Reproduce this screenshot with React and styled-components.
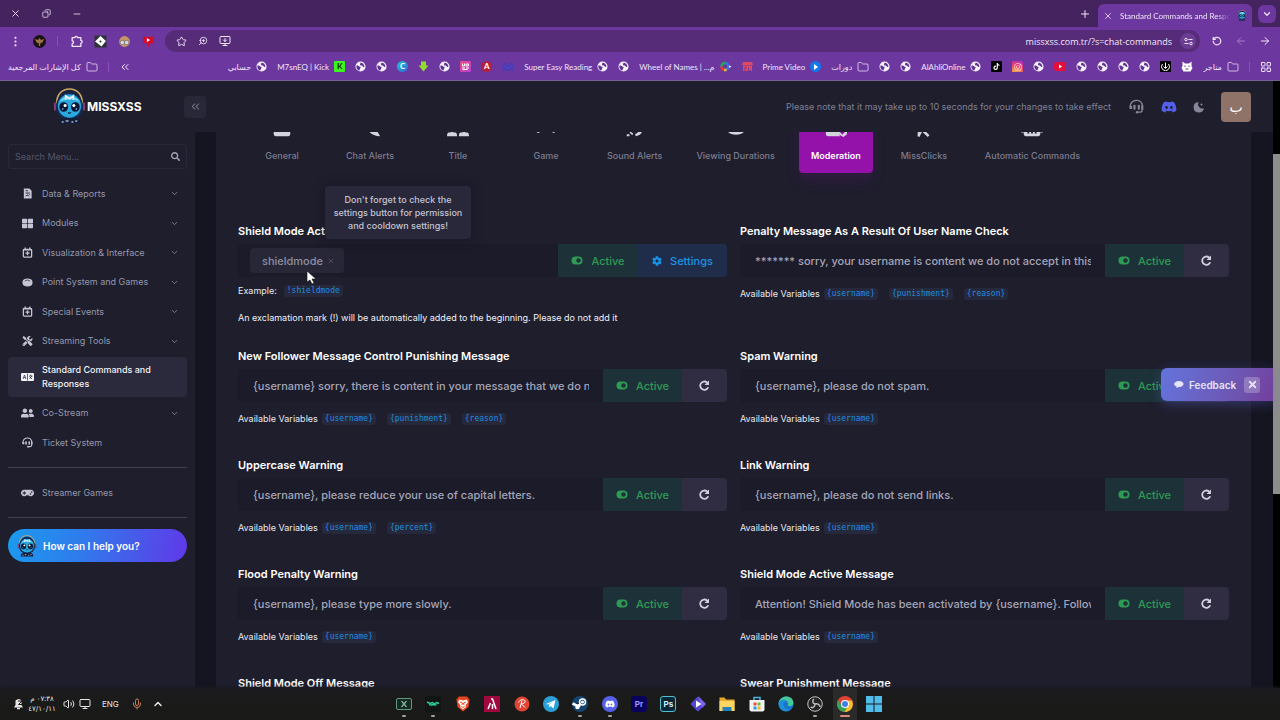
import { useState } from 'react';
import styled, { createGlobalStyle, css } from 'styled-components'
import { FaSearch, FaThLarge, FaTools, FaUserFriends, FaGamepad, FaDiscord, FaInstagram, FaTiktok, FaCog } from 'react-icons/fa';
import { X, Copy, Minus, Plus, Star, MonitorDown, ZoomIn, ArrowLeft, ArrowRight, ChevronDown, ChevronUp, ChevronsLeft, Folder, LayoutGrid, Volume2, Monitor, Mic, EllipsisVertical, RotateCcw } from 'lucide-react';

const GlobalStyle = createGlobalStyle`
  * {
    box-sizing: border-box;
  }
  body {
    margin: 0;
    background: #151521;
    font-family: Inter, "DejaVu Sans", sans-serif;
    color: #fff;
  }
  button, input {
    font-family: inherit;
    border: none;
    margin: 0;
    padding: 0;
    background: none;
    color: inherit;
  }
  button {
    cursor: pointer;
  }
  a {
    color: inherit;
    text-decoration: none;
  }
  svg {
    display: block;
    flex: none;
  }
`
const Screen = styled.div`
  height: 100vh;
  display: flex;
  flex-direction: column;
  overflow: hidden;
`

/* ---------- browser window ---------- */

const TitleBar = styled.div`
  height: 27px;
  flex: none;
  display: flex;
  align-items: center;
  justify-content: space-between;
  padding: 0 4px 0 8px;
  background-color: #45235f;
  color: #eee4f6;
  font-family: Lato, "DejaVu Sans", sans-serif;
`
const WindowControls = styled.div`
  display: flex;
  gap: 17px;
`
const IconButton = styled.button`
  width: ${(p) => p.$size || 14}px;
  height: ${(p) => p.$size || 14}px;
  display: flex;
  align-items: center;
  justify-content: center;
  flex: none;
  color: ${(p) => p.$color || 'inherit'};
`
const TabStrip = styled.div`
  align-self: stretch;
  display: flex;
  align-items: center;
  gap: 6px;
`
const BrowserTab = styled.div`
  width: 154px;
  height: 23px;
  align-self: flex-end;
  display: flex;
  align-items: center;
  gap: 7px;
  padding: 0 5px;
  border-radius: 6px 6px 0 0;
  background-color: #6c379f;
  font-size: 8px;
`
const TabTitle = styled.span`
  flex: 1;
  white-space: nowrap;
  overflow: hidden;
  mask-image: linear-gradient(to right, #000 88%, transparent);
`
const TabSearch = styled(IconButton)`
  border-radius: 6px;
  background-color: #6c379f;
`
const Toolbar = styled.div`
  height: 28px;
  flex: none;
  display: flex;
  align-items: center;
  padding: 0 8px;
  gap: 10px;
  background-color: #6c379f;
  color: #f1e6fa;
  font-family: "Open Sans", "DejaVu Sans", sans-serif;
`
const Extensions = styled.div`
  display: flex;
  align-items: center;
  gap: 11px;
`
const Separator = styled.span`
  width: 1px;
  height: 10px;
  background-color: #8a4fc0;
`
const AddressBar = styled.div`
  flex: 1;
  height: 22px;
  display: flex;
  align-items: center;
  gap: 8px;
  padding: 0 4px 0 9px;
  border-radius: 11px;
  background-color: #562c78;
`
const AddressInput = styled.input`
  flex: 1;
  min-width: 0;
  text-align: right;
  font-size: 9px;
  outline: none;
`
const SiteInfo = styled(IconButton)`
  border-radius: 50%;
  background-color: #6c3d94;
`
const BookmarksBar = styled.nav`
  height: 26px;
  flex: none;
  display: flex;
  align-items: center;
  padding: 0 8px 2px;
  gap: 10px;
  border-bottom: 1px solid #75608f;
  background-color: #6c379f;
  color: #f1e6fa;
  font-family: Lato, "DejaVu Sans", sans-serif;
  font-size: 8px;
  white-space: nowrap;
`
const BookmarkList = styled.div`
  flex: 1;
  display: flex;
  align-items: center;
  justify-content: space-between;
  margin-left: 87px;
`
const Bookmark = styled.a`
  display: flex;
  align-items: center;
  gap: 5px;
`
const Favicon = styled.span`
  width: 11px;
  height: 11px;
  display: flex;
  align-items: center;
  justify-content: center;
  border-radius: ${(p) => (p.$round ? '50%' : '1px')};
  background: ${(p) => p.$bg};
  color: ${(p) => p.$color || '#fff'};
  font-size: 8px;
  font-weight: 700;
  line-height: 11px;
`

/* ---------- dashboard ---------- */

const PageWrapper = styled.div`
  flex: 1;
  min-height: 0;
  display: flex;
  position: relative;
`
const Dashboard = styled.div`
  flex: 1;
  min-width: 0;
  display: flex;
  flex-direction: column;
`
const ScrollTrack = styled.div`
  width: 7px;
  display: grid;
  grid-template-rows: 12fr 56fr 32fr;
  background-color: #000;
`
const ScrollThumb = styled.div`
  grid-row: 2;
  background-color: #8d8d8b;
`
const Header = styled.header`
  height: 51px;
  flex: none;
  display: flex;
  align-items: center;
  padding: 0 22px 0 53px;
  background-color: #1e1e2d;
`
const Brand = styled.a`
  display: flex;
  align-items: center;
  gap: 1px;
  width: 131px;
  font-size: 12px;
  font-weight: 700;
`
const CollapseButton = styled(IconButton)`
  border-radius: 3px;
  background-color: #282838;
  color: #6a6a7d;
`
const HeaderNote = styled.span`
  margin-left: auto;
  color: #808093;
  font-size: 9px;
`
const HeaderIcons = styled.div`
  display: flex;
  align-items: center;
  gap: 14px;
  margin-left: 14px;
  color: #858598;
`
const Avatar = styled.button`
  width: 30px;
  height: 30px;
  border-radius: 4px;
  background-color: #8f7268;
  color: #fff;
  font-size: 14px;
`
const Body = styled.div`
  flex: 1;
  min-height: 0;
  display: flex;
`
const Sidebar = styled.aside`
  width: 195px;
  flex: none;
  padding: 12px 8px;
  background-color: #1e1e2d;
`
const SearchBox = styled.label`
  height: 25px;
  display: flex;
  align-items: center;
  padding: 0 6px;
  border: 1px solid #28283a;
  border-radius: 3px;
  color: #a2a2b5;
`
const SearchInput = styled.input`
  flex: 1;
  min-width: 0;
  font-size: 9px;
  outline: none;
  &::placeholder {
    color: #565669;
    opacity: 1;
  }
`
const Menu = styled.nav`
  min-height: 276px;
  display: flex;
  flex-direction: column;
  justify-content: space-between;
  margin-top: 11px;
`
const MenuItem = styled.a`
  min-height: 27px;
  display: flex;
  align-items: center;
  gap: 8px;
  padding: 6px 8px 6px 13px;
  border-radius: 4px;
  color: #9697aa;
  font-size: 9px;
  line-height: 14px;

  & > svg:first-child {
    width: 13px;
    color: #c5c5d6;
  }
  & > span {
    flex: 1;
  }
  ${(p) => p.$active && css`
    padding-right: 24px;
    background-color: #2a2a3c;
    color: #f2f2f8;
    font-weight: 500;
  `}
`
const Divider = styled.hr`
  height: 1px;
  margin: 11px 0;
  border: none;
  background-color: #42424f;
`
const HelpButton = styled.button`
  width: 100%;
  height: 33px;
  display: flex;
  align-items: center;
  gap: 6px;
  padding: 0 9px;
  border-radius: 17px;
  background: linear-gradient(100deg, #1a9bee, #2f7cec 40%, #6038e8);
  font-size: 10px;
  font-weight: 600;
`
const Content = styled.main`
  flex: 1;
  min-width: 0;
  margin: 0 22px 0 21px;
  padding: 0 22px;
  overflow: hidden;
  background-color: #1e1e2d;
`
const Tabs = styled.div`
  height: 41px;
  display: flex;
  align-items: flex-end;
  gap: 14px;
  padding-left: 7px;
`
const Tab = styled.button`
  min-width: 74px;
  height: 73px;
  display: flex;
  flex-direction: column;
  align-items: center;
  justify-content: flex-end;
  gap: 10px;
  padding: 0 10px 9px;
  border-radius: 4px;
  color: #7c7c8f;
  font-size: 9px;
  font-weight: 500;
  line-height: 16px;
  white-space: nowrap;
  & > svg {
    color: #d4d4dc;
  }
  ${(p) => p.$active && css`
    background-color: #9411aa;
    color: #fff;
    font-weight: 600;
    box-shadow: 0 8px 14px rgba(110, 20, 130, 0.22);
  `}
`
const FormGrid = styled.form`
  display: grid;
  grid-template-columns: 1fr 1fr;
  gap: 21px 13px;
  margin-top: 49px;
`
const Field = styled.div`
  min-width: 0;
  min-height: 88px;
`
const FieldLabel = styled.label`
  display: block;
  margin-bottom: 4px;
  font-size: 11px;
  font-weight: 600;
  line-height: 18px;
`
const InputGroup = styled.div`
  height: 33px;
  display: flex;
  border-radius: 4px;
  overflow: hidden;
  background-color: #1c1b29;
`
const TextInput = styled.input`
  flex: 1;
  min-width: 0;
  padding: 0 14px 0 15px;
  color: #a5a5b8;
  font-size: 11px;
  font-weight: 500;
  outline: none;
`
const TagArea = styled.div`
  flex: 1;
  min-width: 0;
  display: flex;
  align-items: center;
  padding-left: 12px;
`
const Tag = styled.span`
  height: 25px;
  display: flex;
  align-items: center;
  gap: 3px;
  padding: 0 8px 0 12px;
  border-radius: 4px;
  background-color: #272737;
  color: #8e8ea2;
  font-size: 11px;
  font-weight: 500;
`
const GroupButton = styled.button`
  width: ${(p) => p.$width}px;
  flex: none;
  display: flex;
  align-items: center;
  justify-content: center;
  gap: 8px;
  font-size: 11px;
  font-weight: 500;
  ${(p) => p.$kind === 'active' && css`
    background-color: #1c3238;
    color: #309a55;
  `}
  ${(p) => p.$kind === 'settings' && css`
    background-color: #1f2d4a;
    color: #1a93e6;
  `}
  ${(p) => p.$kind === 'reset' && css`
    background-color: #302d43;
    color: #d0d0de;
  `}
`
const HelpLine = styled.div`
  display: flex;
  align-items: center;
  gap: ${(p) => (p.$example ? 7 : 4)}px;
  margin-top: ${(p) => (p.$example ? 6 : 9)}px;
  color: #e9e9f0;
  font-size: 9px;
  line-height: 16px;
`
const Variable = styled.code`
  margin-right: ${(p) => (p.$example ? 0 : 7)}px;
  padding: 0 3px;
  border-radius: 3px;
  background-color: #26283b;
  color: #1f8ee0;
  font-family: "DejaVu Sans Mono", monospace;
  font-size: 8px;
  line-height: 12px;
`
const Hint = styled.p`
  margin: 11px 0 0;
  color: #f0f0f5;
  font-size: 9px;
  line-height: 16px;
`

/* ---------- floating parts ---------- */

const Tooltip = styled.div`
  position: absolute;
  top: 105px;
  left: 325px;
  width: 146px;
  padding: 7px 8px;
  border-radius: 4px;
  background-color: #28283a;
  box-shadow: 0 0 12px rgba(10, 10, 20, 0.35);
  color: #c4c4d2;
  font-size: 9px;
  font-weight: 500;
  line-height: 13px;
  text-align: center;
`
const Feedback = styled.div`
  position: absolute;
  top: 287px;
  right: 7px;
  width: 112px;
  height: 33px;
  display: flex;
  align-items: center;
  gap: 5px;
  padding-left: 13px;
  border-radius: 6px 0 0 6px;
  background: linear-gradient(110deg, #6474dc, #6e54b0 70%, #733f9c);
  box-shadow: 0 3px 12px rgba(95, 100, 220, 0.35);
  color: #e6e4f6;
  font-size: 10px;
  font-weight: 600;
`
const FeedbackClose = styled(IconButton)`
  margin-left: 3px;
  border-radius: 3px;
  background-color: rgba(255, 255, 255, 0.24);
`
const Cursor = styled.svg`
  position: absolute;
  top: 189px;
  left: 306px;
`

/* ---------- taskbar ---------- */

const Taskbar = styled.footer`
  height: 32px;
  flex: none;
  display: flex;
  align-items: center;
  padding-left: 13px;
  background: linear-gradient(#1c1b20, #1b1b1b 6px, #191918);
  box-shadow: 0 -1px 3px #1c1b20;
  position: relative;
  color: #e6e6e6;
`
const Tray = styled.div`
  width: 383px;
  display: flex;
  align-items: center;
  font-size: 8px;
`
const Clock = styled.div`
  width: 28px;
  margin: 0 7px 0 3px;
  text-align: center;
  font-size: 7px;
  line-height: 10px;
  white-space: nowrap;
`
const TrayItem = styled.span`
  margin-right: ${(p) => p.$space}px;
`
const Apps = styled.div`
  width: 486px;
  display: flex;
  justify-content: space-between;
`
const AppButton = styled.button`
  width: 16px;
  height: 32px;
  display: flex;
  flex-direction: column;
  align-items: center;
  padding-top: 8px;
  gap: 3px;
  ${(p) => p.$current && css`
    background-color: #2b2a2b;
    box-shadow: -4px 0 #2b2a2b, 4px 0 #2b2a2b;
  `}
`
const AppMark = styled.span`
  width: ${(p) => (p.$current ? 10 : 4)}px;
  height: 2px;
  border-radius: 1px;
  background-color: ${(p) => (p.$current ? '#e08878' : '#a2a2a2')};
`
const AppTile = styled.span`
  width: 16px;
  height: 16px;
  border: 1px solid ${(p) => p.$border};
  border-radius: 3px;
  background-color: ${(p) => p.$bg};
  color: ${(p) => p.$color};
  font-size: 8px;
  font-weight: 700;
  line-height: 14px;
  text-align: center;
`

const Globe = () => (
  <svg width="11" height="11" viewBox="0 0 24 24">
    <circle cx="12" cy="12" r="11" fill="#f7f1fc" />
    <path d="M3 10c3-1 5 0 6 2l3 1c1 2-1 2-1 4l-2 4C6 20 2 16 3 10zM13 3l5 3 3 6-3 1-3-3-4-1 0-3z" fill="#5f3190" />
  </svg>
)

const Mascot = ({ size }) => (
  <svg width={size} height={Math.round(size * 1.12)} viewBox="0 0 34 38">
    <path d="M4 17C3 6 10 1 17 1s14 5 13 16" fill="none" stroke="#c9a869" strokeWidth="1.600" />
    <path d="M5 17C5 7 11 3 17 3s12 4 12 14" fill="#15264c" />
    <circle cx="17" cy="19" r="14" fill="#152b55" />
    <circle cx="17" cy="18.500" r="12" fill="#28a9df" />
    <path d="M7 14c3-7 17-7 20 0-5-3-15-3-20 0z" fill="#74d3ef" />
    <path d="M13 12V8l4 3 4-3v4" fill="none" stroke="#eef" strokeWidth="1.600" />
    <ellipse cx="11" cy="19.500" rx="4.500" ry="5" fill="#0d1634" />
    <ellipse cx="23" cy="19.500" rx="4.500" ry="5" fill="#0d1634" />
    <circle cx="12.500" cy="18" r="1.600" fill="#fff" />
    <circle cx="21.500" cy="18" r="1.600" fill="#fff" />
    <circle cx="10" cy="21.500" r=".8" fill="#8bdcff" />
    <circle cx="24" cy="21.500" r=".8" fill="#8bdcff" />
    <path d="M15.500 25q1.500 1.500 3 0" fill="none" stroke="#0d1634" strokeWidth="1.200" />
    <path d="M2 15v8M32 15v8" stroke="#8d3d78" strokeWidth="2" />
    <path d="M7 33c3-3 17-3 20 0l1 4H6z" fill="#141d3a" />
    <path d="M9 35h2M13 34h3M19 35h2M23 34h2" stroke="#a5b3cb" strokeWidth="1.600" />
  </svg>
)

const PuzzleIcon = () => (
  <svg width="13" height="13" viewBox="0 0 24 24" fill="none" stroke="currentColor" strokeWidth="2.400" strokeLinejoin="round">
    <path d="M4 5h5a2.500 2.500 0 0 1 5 0h6v5a2.500 2.500 0 0 1 0 5v6H4v-5a2.500 2.500 0 0 0 0-5z" />
  </svg>
)

const ToggleIcon = () => (
  <svg width="12" height="9" viewBox="0 0 24 18">
    <rect x="1" y="1" width="22" height="16" rx="8" fill="currentColor" />
    <circle cx="15" cy="9" r="4.500" fill="#1c3238" />
  </svg>
)

const RefreshIcon = () => (
  <svg width="11" height="11" viewBox="0 0 22 22" fill="none" stroke="currentColor" strokeWidth="3.600">
    <path d="M18.500 14.500A8.300 8.300 0 1 1 16 4.800L18 7" />
    <path d="M20 1v9h-9z" fill="currentColor" stroke="none" />
  </svg>
)

const SupportIcon = ({ size = 15 }) => (
  <svg width={size} height={size} viewBox="0 0 24 24" fill="none" stroke="currentColor" strokeWidth="2.200">
    <path d="M2 14V11a10 10 0 0 1 19-3v10q0 3-4 3h-4" />
    <path d="M1 11h4v5H1zM20 10h3v7h-3z" fill="currentColor" stroke="none" />
    <rect x="7" y="9" width="3.500" height="8" rx="1.500" fill="currentColor" stroke="none" />
    <rect x="14" y="9" width="3.500" height="8" rx="1.500" fill="currentColor" stroke="none" />
    <circle cx="13" cy="21" r="2" fill="currentColor" stroke="none" />
  </svg>
)

const MoonIcon = () => (
  <svg width="12" height="12" viewBox="0 0 24 24" fill="currentColor">
    <path d="M11 2a9 9 0 0 0 11 12.500A10.500 10.500 0 1 1 11 2z" />
    <path d="M17 4l1 2 2 1-2 1-1 2-1-2-2-1 2-1z" />
  </svg>
)

const ReportIcon = () => (
  <svg height="11" viewBox="0 0 24 24">
    <path d="M4 1h12l5 5v17H4z" fill="currentColor" />
    <path d="M8 6h5M8 11h9M8 18l3-3 3 2 3-3" stroke="#1e1e2d" strokeWidth="2" fill="none" />
  </svg>
)

const CalendarPlusIcon = () => (
  <svg height="11" viewBox="0 0 24 24" fill="none" stroke="currentColor" strokeWidth="2.800">
    <rect x="3" y="5" width="18" height="17" rx="2" />
    <path d="M3 6h18M7 1v5M17 1v5M12 9v9M7.500 13.500h9" />
  </svg>
)

const CoinIcon = () => (
  <svg height="9" viewBox="0 0 24 20">
    <path d="M1 8c0-9 22-9 22 0v4c0 9-22 9-22 0z" fill="currentColor" />
    <path d="M6 7c3-3 9-3 12 0" stroke="#1e1e2d" strokeWidth="1.500" fill="none" />
  </svg>
)

const TranslateIcon = () => (
  <svg height="8" viewBox="0 0 26 16">
    <rect width="26" height="16" rx="2" fill="#f2f2f8" />
    <path d="M13 1v14M4 12l3-8 3 8M5 9h4M16 6h7M19.500 3v3M17 12l5-6M17 7l5 5" stroke="#2a2a3c" strokeWidth="1.400" fill="none" />
  </svg>
)

const BubbleIcon = () => (
  <svg width="10" height="9" viewBox="0 0 20 18">
    <path d="M10 2c12 0 12 12 0 12l-5 2v-3C-3 10 0 2 10 2z" fill="currentColor" />
  </svg>
)

// only the lower edge of these shows under the header
const tabDrawings = {
  general: <path d="M3 4h18v16q0 2-2 2H5q-2 0-2-2z" />,
  chat: <path d="M2 3h18v14q2 3 3 5-8 0-12-5H2z" />,
  title: <path d="M2 18h7q2 0 2 4H0q0-4 2-4zM15 18h7q2 0 2 4H13q0-4 2-4zM4 2h3v17H4zM17 2h3v17h-3z" />,
  game: <path d="M3 3h18q3 12 0 15.500-3 0-5-5H8q-2 5-5 5-3-1 0-15.500z" />,
  sound: <path d="M7 17l3 2-1 2-3-3zM3 20h3v2H3zM12 20q4-2 5-5l3 1q-1 5-7 6z" />,
  view: <path d="M3 6h18v11q-3 3.500-9 3.500T3 17z" />,
  moderation: <><path d="M1 4h15v18H3q-2 0-2-2z" /><path d="M14 9h11v8q0 3-5 6-6-3-6-6z" /><path d="M16 16l3 3 4-5" stroke="#9411aa" strokeWidth="2" fill="none" /></>,
  click: <path d="M6 2l14 13-7 1 5 5-2 2-6-6-3 6-2-1z" />,
  auto: <><path d="M3 4h18v16q0 2-2 2H5q-2 0-2-2zM0 16h3v2H0zM21 16h3v2h-3z" /><path d="M7 18h2M11 18h2M15 18h2" stroke="#1e1e2d" strokeWidth="2" /></>,
}

const tabs = [
  { icon: 'general', name: 'General' },
  { icon: 'chat', name: 'Chat Alerts' },
  { icon: 'title', name: 'Title' },
  { icon: 'game', name: 'Game' },
  { icon: 'sound', name: 'Sound Alerts' },
  { icon: 'view', name: 'Viewing Durations' },
  { icon: 'moderation', name: 'Moderation' },
  { icon: 'click', name: 'MissClicks' },
  { icon: 'auto', name: 'Automatic Commands' },
]

const menu = [
  { name: 'Data & Reports', icon: <ReportIcon />, more: true },
  { name: 'Modules', icon: <FaThLarge size={11} />, more: true },
  { name: 'Visualization & Interface', icon: <CalendarPlusIcon />, more: true },
  { name: 'Point System and Games', icon: <CoinIcon />, more: true },
  { name: 'Special Events', icon: <CalendarPlusIcon />, more: true },
  { name: 'Streaming Tools', icon: <FaTools size={10} />, more: true },
  { name: 'Standard Commands and Responses', icon: <TranslateIcon />, active: true },
  { name: 'Co-Stream', icon: <FaUserFriends size={12} />, more: true },
  { name: 'Ticket System', icon: <SupportIcon size={11} /> },
]

const initialFields = [
  { id: 'penalty', label: 'Penalty Message As A Result Of User Name Check', value: '******* sorry, your username is content we do not accept in this channel.', vars: ['username', 'punishment', 'reason'] },
  { id: 'follower', label: 'New Follower Message Control Punishing Message', value: '{username} sorry, there is content in your message that we do not accept.', vars: ['username', 'punishment', 'reason'] },
  { id: 'spam', label: 'Spam Warning', value: '{username}, please do not spam.', vars: ['username'] },
  { id: 'uppercase', label: 'Uppercase Warning', value: '{username}, please reduce your use of capital letters.', vars: ['username', 'percent'] },
  { id: 'link', label: 'Link Warning', value: '{username}, please do not send links.', vars: ['username'] },
  { id: 'flood', label: 'Flood Penalty Warning', value: '{username}, please type more slowly.', vars: ['username'] },
  { id: 'shieldOn', label: 'Shield Mode Active Message', value: 'Attention! Shield Mode has been activated by {username}. Follower chat is on.', vars: ['username'] },
  { id: 'shieldOff', label: 'Shield Mode Off Message', value: '', vars: ['username'] },
  { id: 'swear', label: 'Swear Punishment Message', value: '', vars: ['username'] },
]

const bookmarks = [
  { text: 'حسابي', icon: <Globe /> },
  { text: 'M7snEQ | Kick', icon: <Favicon $bg="#3df51e" $color="#0c1a0c">K</Favicon> },
  { icon: <Globe /> },
  { icon: <Globe /> },
  { icon: <Favicon $round $bg="linear-gradient(135deg, #27c6d8, #2f62dd)">C</Favicon> },
  { icon: <svg width="11" height="11" viewBox="0 0 22 22"><path d="M6 1h10v8h5L11 21 1 9h5z" fill="#93dc2c" /></svg> },
  { icon: <Globe /> },
  { icon: <Favicon $bg="linear-gradient(135deg, #f0477e, #b83fd8)"><svg width="9" height="9" viewBox="0 0 18 18"><path d="M3 3v5h4V3M10 4h5v4h-5zM2 12h6M10 12h6M3 15h10" stroke="#fff" strokeWidth="2" fill="none" /></svg></Favicon> },
  { icon: <Favicon $round $bg="#b51f3d">A</Favicon> },
  { icon: <svg width="12" height="11" viewBox="0 0 24 22"><path d="M1 4h6l5 5 5-5h6v15H1z" fill="#4a3cb4" /><path d="M4 9l8 6 8-6" stroke="#5b45c8" strokeWidth="2" fill="none" /></svg> },
  { text: 'Super Easy Reading', icon: <Globe /> },
  { icon: <Globe /> },
  { text: 'Wheel of Names | ...م', icon: <svg width="12" height="11" viewBox="0 0 24 22"><circle cx="10" cy="11" r="7" fill="none" stroke="#3a75e8" strokeWidth="5" /><path d="M3 11a7 7 0 0 1 7-7" fill="none" stroke="#2ba24c" strokeWidth="5" /><path d="M3 11a7 7 0 0 0 5 7" fill="none" stroke="#e3342f" strokeWidth="5" /><path d="M8 18h5" stroke="#f1b91f" strokeWidth="5" /><path d="M18 9l5 2-5 3z" fill="#fff" /></svg> },
  { icon: <svg width="11" height="11" viewBox="0 0 22 22"><path d="M2 2h18l2 6H0zM2 9h18v11H2z" fill="#dc4b64" /><path d="M6 19v-6h3M13 13v6h4" stroke="#6c379f" strokeWidth="2" fill="none" /></svg> },
  { text: 'Prime Video', icon: <Favicon $round $bg="#1279ec"><svg width="5" height="6" viewBox="0 0 5 6"><path d="M1 0l4 3-4 3z" fill="#fff" /></svg></Favicon> },
  { text: 'دورات', icon: <Folder size={12} strokeWidth={1.5} /> },
  { icon: <Globe /> },
  { icon: <Globe /> },
  { text: 'AlAhliOnline', icon: <Globe /> },
  { icon: <Favicon $bg="#000"><FaTiktok size={7} /></Favicon> },
  { icon: <Favicon $bg="linear-gradient(200deg, #a52fd0, #ef3b63 50%, #f8b13c)"><FaInstagram size={8} /></Favicon> },
  { icon: <Globe /> },
  { icon: <svg width="12" height="9" viewBox="0 0 24 18"><rect width="24" height="18" rx="4" fill="#e3103b" /><path d="M10 5l6 4-6 4z" fill="#fff" /></svg> },
  { icon: <Globe /> },
  { icon: <Globe /> },
  { icon: <Globe /> },
  { icon: <Globe /> },
  { icon: <Favicon $bg="#000"><svg width="9" height="9" viewBox="0 0 18 18"><path d="M3 4a8 8 0 1 0 12 0M9 1v11M5 9l4 4 4-4" stroke="#fff" strokeWidth="2" fill="none" /></svg></Favicon> },
  { icon: <svg width="12" height="11" viewBox="0 0 24 22"><path d="M3 1l5 4h8l5-4v9l2 4-4 7H5l-4-7 2-4z" fill="#fff" /><path d="M8 9v3M16 9v3M9 16h6" stroke="#6c379f" strokeWidth="2" /></svg> },
  { text: 'متاجر', icon: <Folder size={12} strokeWidth={1.5} /> },
]

const apps = [
  { name: 'Excel', open: true, art: <><rect x="1" y="5" width="30" height="22" rx="3" fill="#17261f" stroke="#5e9c83" strokeWidth="2" /><path d="M11 10l10 12M21 10L11 22" stroke="#78b99e" strokeWidth="2.500" /></> },
  { name: 'Monitor', open: true, art: <><rect width="32" height="32" rx="4" fill="#111514" /><path d="M4 12l6 3 5-2 4 3 4-3 5 2M8 17l5 1 4-1 6 1" stroke="#2bd39b" strokeWidth="3" fill="none" /></> },
  { name: 'Brave', art: <><path d="M8 1h16l5 6-2 15-11 9L5 22 3 7z" fill="#e8431e" /><path d="M9 7l7 2 7-2 3 5-5 7 1 3-6 5-6-5 1-3-5-7z" fill="#fff" /><path d="M10 12l5 2-1 4M22 12l-5 2 1 4M13 21l3 2 3-2" stroke="#e8431e" strokeWidth="2" fill="none" /></> },
  { name: 'Alight', art: <><rect width="32" height="32" fill="#a1083f" /><path d="M8 26l5-12M14 6h3l7 20M17 16v10" stroke="#fff" strokeWidth="3" fill="none" /></> },
  { name: 'Recorder', art: <><circle cx="16" cy="16" r="15" fill="#df4332" /><path d="M9 13c3-8 15-7 13-1-1 4-8 4-8 4M16 9l-4 15M16 17l6 6" stroke="#fff" strokeWidth="2" fill="none" /></> },
  { name: 'Telegram', art: <><circle cx="16" cy="16" r="16" fill="#2ca0d6" /><path d="M6 16l19-8-4 17-6-5-3 3v-6l9-6-11 6z" fill="#fff" /></> },
  { name: 'Steam', open: true, art: <><circle cx="16" cy="16" r="16" fill="#15436f" /><circle cx="21" cy="12" r="6" fill="none" stroke="#fff" strokeWidth="3" /><circle cx="21" cy="12" r="3" fill="#fff" /><path d="M1 15l11 5 6-5M12 21l4-2" stroke="#fff" strokeWidth="5" /><circle cx="11" cy="22" r="4.500" fill="#fff" /></> },
  { name: 'Discord', open: true, art: <><circle cx="16" cy="16" r="16" fill="#5661ea" /><FaDiscord x="6" y="6" size={20} color="#fff" /></> },
  { name: 'Premiere', tile: <AppTile $bg="#08005c" $border="#08005c" $color="#a39bff">Pr</AppTile> },
  { name: 'Photoshop', tile: <AppTile $bg="#0a2534" $border="#48c4d4" $color="#d6f3fb">Ps</AppTile> },
  { name: 'Player', art: <><rect x="5" y="5" width="22" height="22" rx="3" transform="rotate(45 16 16)" fill="#5546d1" /><path d="M16 0l16 16-8 8z" fill="#7a62ea" /><path d="M12 9l11 7-11 7z" fill="#fff" /></> },
  { name: 'Files', art: <><path d="M1 3h10l3 4h17v23H1z" fill="#e6a82c" /><path d="M1 10h30v20H1z" fill="#fcd462" /><path d="M7 22h18v8H7z" fill="#2280bd" /></> },
  { name: 'Store', art: <><path d="M10 9V3h12v6" fill="none" stroke="#48b4dd" strokeWidth="3" /><path d="M1 8h30v19q0 4-4 4H5q-4 0-4-4z" fill="#f2f2f2" /><path d="M9 13h6v6H9z" fill="#e65035" /><path d="M17 13h6v6h-6z" fill="#70b83c" /><path d="M9 21h6v6H9z" fill="#2e98dc" /><path d="M17 21h6v6h-6z" fill="#edb72b" /></> },
  { name: 'Edge', art: <><circle cx="16" cy="16" r="15" fill="#1a74c8" /><path d="M1 14C4-3 30-4 31 14c0 6-8 8-12 5 4-6-2-11-8-9-5 1-9 3-10 4z" fill="#45c99b" /><path d="M1 14c3-8 14-8 18-3-5-1-9 2-8 7 1 7 8 11 14 8-8 9-24 4-24-12z" fill="#1c8fd8" /></> },
  { name: 'OBS', open: true, art: <><circle cx="16" cy="16" r="14.500" fill="#242326" stroke="#c4c4c4" strokeWidth="2" /><path d="M16 16c-5-1-6-7-2-10M16 16c5-2 10 2 10 6M16 16c0 6-5 9-9 6" stroke="#bbb" strokeWidth="3" fill="none" /></> },
  { name: 'Chrome', current: true, art: <><circle cx="16" cy="16" r="16" fill="#e14133" /><path d="M2 8a16 16 0 0 0 13 24l8-13H9z" fill="#35a356" /><path d="M30 9a16 16 0 0 1-15 23l8-14-4-9z" fill="#f5c22b" /><circle cx="16" cy="16" r="8" fill="#fff" /><circle cx="16" cy="16" r="6" fill="#407fe8" /></> },
  { name: 'Start', art: <path d="M0 0h15v15H0zM17 0h15v15H17zM0 17h15v15H0zM17 17h15v15H17z" fill="#51bdea" /> },
]

const BrowserChrome = () => (
  <>
    <TitleBar>
      <WindowControls>
        <IconButton aria-label="Close"><X size={11} /></IconButton>
        <IconButton aria-label="Restore"><Copy size={9} transform="scale(-1 1)" /></IconButton>
        <IconButton aria-label="Minimize"><Minus size={10} /></IconButton>
      </WindowControls>
      <TabStrip>
        <IconButton aria-label="New tab"><Plus size={12} /></IconButton>
        <BrowserTab>
          <IconButton aria-label="Close tab" $size={10}><X size={10} /></IconButton>
          <TabTitle>Standard Commands and Responses</TabTitle>
          <Mascot size={10} />
        </BrowserTab>
        <TabSearch aria-label="Search tabs" $size={18}><ChevronDown size={10} strokeWidth={3} /></TabSearch>
      </TabStrip>
    </TitleBar>
    <Toolbar>
      <Extensions>
        <IconButton aria-label="Menu"><EllipsisVertical size={13} /></IconButton>
        <svg width="13" height="13" viewBox="0 0 26 26"><circle cx="13" cy="13" r="13" fill="#1b1313" /><path d="M4 8l6 2 3-4 3 4 6-2-3 7-4 1-1 6h-2l-1-6-4-1z" fill="#9b7446" /></svg>
        <Separator />
        <IconButton aria-label="Extensions"><PuzzleIcon /></IconButton>
        <svg width="13" height="13" viewBox="0 0 24 24"><path d="M1 1h22v22H1z" fill="#2a3434" /><path d="M12 2l10 9-8 10L2 12z" fill="#fff" /><circle cx="12" cy="12" r="2" fill="#2a3434" /></svg>
        <svg width="13" height="13" viewBox="0 0 24 24"><circle cx="12" cy="12" r="10" fill="#c79565" /><circle cx="8" cy="14" r="4" fill="#d5dde4" stroke="#556" /><circle cx="16" cy="14" r="4" fill="#d5dde4" stroke="#556" /></svg>
        <svg width="13" height="13" viewBox="0 0 24 24"><path d="M2 3h20v12h-6l-4 8-3-8H2z" fill="#d40c2c" /><path d="M9 6l6 3-6 4z" fill="#fff" /></svg>
      </Extensions>
      <AddressBar>
        <IconButton aria-label="Bookmark"><Star size={11} /></IconButton>
        <IconButton aria-label="Zoom"><ZoomIn size={10} transform="scale(-1 1)" /></IconButton>
        <IconButton aria-label="Install"><MonitorDown size={12} transform="scale(-1 1)" /></IconButton>
        <AddressInput aria-label="Address" defaultValue="missxss.com.tr/?s=chat-commands" />
        <SiteInfo aria-label="Site information" $size={16}>
          <svg width="9" height="9" viewBox="0 0 18 18" fill="none" stroke="currentColor" strokeWidth="2"><circle cx="4" cy="5" r="2.500" /><circle cx="14" cy="13" r="2.500" /><path d="M9 5h8M1 13h8" /></svg>
        </SiteInfo>
      </AddressBar>
      <IconButton aria-label="Reload"><RotateCcw size={10} strokeWidth={3} /></IconButton>
      <IconButton aria-label="Forward" $color="#a57acb"><ArrowLeft size={12} /></IconButton>
      <IconButton aria-label="Back"><ArrowRight size={12} /></IconButton>
    </Toolbar>
    <BookmarksBar>
      <Bookmark href="#all">
        <span>كل الإشارات المرجعية</span>
        <Folder size={12} strokeWidth={1.5} />
      </Bookmark>
      <Separator />
      <ChevronsLeft size={12} />
      <BookmarkList>
        {bookmarks.map((mark, index) => (
          <Bookmark key={index} href="#bookmark" aria-label={mark.text || 'Bookmark'}>
            {mark.text && <span>{mark.text}</span>}
            {mark.icon}
          </Bookmark>
        ))}
      </BookmarkList>
      <Separator />
      <LayoutGrid size={12} />
    </BookmarksBar>
  </>
)

const SideMenu = () => (
  <Sidebar>
    <SearchBox>
      <SearchInput type="text" placeholder="Search Menu..." aria-label="Search Menu" />
      <FaSearch size={9} />
    </SearchBox>
    <Menu>
      {menu.map((item) => (
        <MenuItem key={item.name} href="#menu" $active={item.active}>
          {item.icon}
          <span>{item.name}</span>
          {item.more && <ChevronDown size={9} />}
        </MenuItem>
      ))}
    </Menu>
    <Divider />
    <MenuItem href="#games">
      <FaGamepad size={12} />
      <span>Streamer Games</span>
    </MenuItem>
    <Divider />
    <HelpButton>
      <Mascot size={20} />
      How can I help you?
    </HelpButton>
  </Sidebar>
)

const MessageField = ({ field, onChange }) => (
  <Field>
    <FieldLabel htmlFor={field.id}>{field.label}</FieldLabel>
    <InputGroup>
      <TextInput id={field.id} value={field.value} onChange={(e) => onChange(field.id, e.target.value)} />
      <GroupButton type="button" $kind="active" $width={79}><ToggleIcon />Active</GroupButton>
      <GroupButton type="button" $kind="reset" $width={45} aria-label="Reset"><RefreshIcon /></GroupButton>
    </InputGroup>
    <HelpLine>
      Available Variables
      {field.vars.map((name) => (
        <Variable key={name}>{`{${name}}`}</Variable>
      ))}
    </HelpLine>
  </Field>
)

const App = () => {
  const [fields, setFields] = useState(initialFields)

  const handleChange = (id, value) => {
    setFields(fields.map((field) => (field.id === id ? { ...field, value } : field)))
  }

  return (
    <Screen>
      <GlobalStyle />
      <BrowserChrome />
      <PageWrapper>
        <Dashboard>
          <Header>
            <Brand href="#home"><Mascot size={33} />MISSXSS</Brand>
            <CollapseButton aria-label="Collapse menu" $size={22}><ChevronsLeft size={13} /></CollapseButton>
            <HeaderNote>Please note that it may take up to 10 seconds for your changes to take effect</HeaderNote>
            <HeaderIcons>
              <IconButton aria-label="Support" $size={22}><SupportIcon /></IconButton>
              <IconButton aria-label="Discord" $size={16} $color="#5560ea"><FaDiscord size={16} /></IconButton>
              <IconButton aria-label="Theme" $size={16}><MoonIcon /></IconButton>
              <Avatar aria-label="Account">ب</Avatar>
            </HeaderIcons>
          </Header>
          <Body>
            <SideMenu />
            <Content>
              <Tabs>
                {tabs.map((tab) => (
                  <Tab key={tab.name} $active={tab.name === 'Moderation'}>
                    <svg width="22" height="22" viewBox="0 0 24 24" fill="currentColor">{tabDrawings[tab.icon]}</svg>
                    {tab.name}
                  </Tab>
                ))}
              </Tabs>
              <FormGrid>
                <Field>
                  <FieldLabel htmlFor="shieldCommand">Shield Mode Activation</FieldLabel>
                  <InputGroup>
                    <TagArea>
                      <Tag>shieldmode<IconButton type="button" aria-label="Remove" $size={10} $color="#5f5f73"><X size={8} /></IconButton></Tag>
                      <TextInput id="shieldCommand" />
                    </TagArea>
                    <GroupButton type="button" $kind="active" $width={80}><ToggleIcon />Active</GroupButton>
                    <GroupButton type="button" $kind="settings" $width={89}><FaCog size={10} />Settings</GroupButton>
                  </InputGroup>
                  <HelpLine $example>Example: <Variable $example>!shieldmode</Variable></HelpLine>
                  <Hint>An exclamation mark (!) will be automatically added to the beginning. Please do not add it</Hint>
                </Field>
                {fields.map((field) => (
                  <MessageField key={field.id} field={field} onChange={handleChange} />
                ))}
              </FormGrid>
            </Content>
          </Body>
        </Dashboard>
        <ScrollTrack><ScrollThumb /></ScrollTrack>
        <Tooltip role="tooltip">Don't forget to check the settings button for permission and cooldown settings!</Tooltip>
        <Cursor width="10" height="15" viewBox="0 0 10 15"><path d="M1 1v11l3-2 2 4 2-1-2-4h4z" fill="#fff" stroke="#111" strokeWidth=".6" /></Cursor>
        <Feedback>
          <BubbleIcon />
          Feedback
          <FeedbackClose aria-label="Close feedback" $size={16}><X size={11} strokeWidth={4} /></FeedbackClose>
        </Feedback>
      </PageWrapper>
      <Taskbar>
        <Tray>
          <svg width="12" height="12" viewBox="0 0 24 24"><path d="M5 5q7-6 12 0v9l3 5H2l3-5z" fill="#e6e6e6" /><path d="M8 21h6" stroke="#e6e6e6" strokeWidth="3" /><path d="M10 6h8l-7 7h8" stroke="#1b1b1b" strokeWidth="2" fill="none" /></svg>
          <Clock><div dir="rtl">٠٧:٣٨ م</div><div>٤٧/١٠/١١</div></Clock>
          <TrayItem $space={4}><Volume2 size={12} /></TrayItem>
          <TrayItem $space={11}><Monitor size={12} /></TrayItem>
          <TrayItem $space={12}>ENG</TrayItem>
          <TrayItem $space={9}><Mic size={12} color="#c77b57" /></TrayItem>
          <TrayItem $space={0}><ChevronUp size={12} strokeWidth={3} /></TrayItem>
        </Tray>
        <Apps>
          {apps.map((app) => (
            <AppButton key={app.name} aria-label={app.name} $current={app.current}>
              {app.tile || <svg width="16" height="16" viewBox="0 0 32 32">{app.art}</svg>}
              {(app.open || app.current) && <AppMark $current={app.current} />}
            </AppButton>
          ))}
        </Apps>
      </Taskbar>
    </Screen>
  )
}

export default App
